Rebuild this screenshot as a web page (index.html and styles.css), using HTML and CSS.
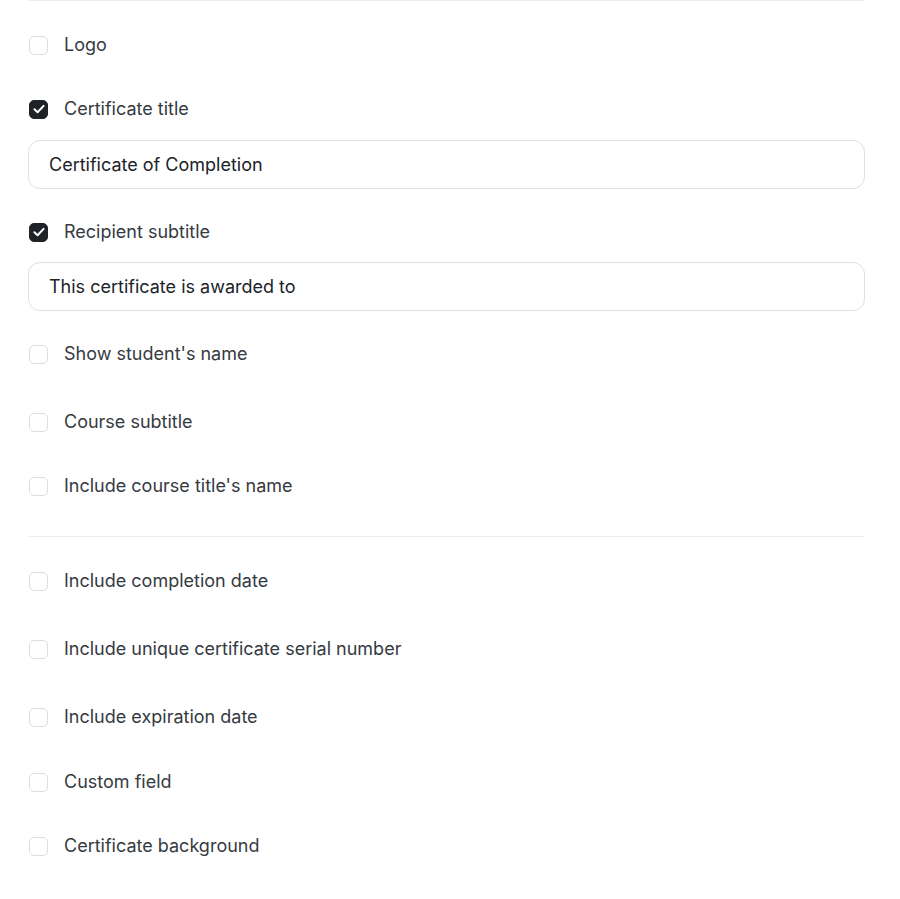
FILE: index.html
```html
<!DOCTYPE html>
<html lang="en">
<head>
<meta charset="utf-8">
<title>Certificate settings</title>
<link rel="stylesheet" href="styles.css">
</head>
<body>
<div class="panel">
  <div class="divider divider-top"></div>

  <label class="row r-logo"><span class="box"></span><span class="label">Logo</span></label>

  <label class="row r-gap40"><span class="box checked"><svg viewBox="0 0 14 14" width="14" height="14"><path d="M2.4 7.3 L5.6 10.3 L11.6 3.9" fill="none" stroke="#fff" stroke-width="2" stroke-linecap="round" stroke-linejoin="round"/></svg></span><span class="label">Certificate title</span></label>
  <div class="field f-first">Certificate of Completion</div>

  <label class="row r-gap31"><span class="box checked"><svg viewBox="0 0 14 14" width="14" height="14"><path d="M2.4 7.3 L5.6 10.3 L11.6 3.9" fill="none" stroke="#fff" stroke-width="2" stroke-linecap="round" stroke-linejoin="round"/></svg></span><span class="label">Recipient subtitle</span></label>
  <div class="field f-second">This certificate is awarded to</div>

  <label class="row r-gap31"><span class="box"></span><span class="label">Show student's name</span></label>
  <label class="row r-gap44"><span class="box"></span><span class="label">Course subtitle</span></label>
  <label class="row r-gap40"><span class="box"></span><span class="label">Include course title's name</span></label>

  <div class="divider divider-mid"></div>

  <label class="row r-gap32"><span class="box"></span><span class="label">Include completion date</span></label>
  <label class="row r-gap44"><span class="box"></span><span class="label">Include unique certificate serial number</span></label>
  <label class="row r-gap44"><span class="box"></span><span class="label">Include expiration date</span></label>
  <label class="row r-gap41"><span class="box"></span><span class="label">Custom field</span></label>
  <label class="row r-gap40"><span class="box"></span><span class="label">Certificate background</span></label>
</div>
</body>
</html>
```

FILE: styles.css
```css
* { box-sizing: border-box; }
html, body { margin: 0; padding: 0; background: #ffffff; }
body {
  font-family: Inter, "Noto Sans", "DejaVu Sans", sans-serif;
  font-size: 18px;
  color: #363a41;
}
.panel {
  display: flex;
  flex-direction: column;
  margin-left: 28px;
  width: 837px;
}
.divider {
  height: 1px;
  background: #ececee;
  margin-left: 1px;
  margin-right: 1px;
}
.divider-mid { margin-top: 38px; }
.row {
  display: flex;
  align-items: center;
  height: 24px;
  gap: 16px;
  padding-left: 1px;
}
.r-logo { margin-top: 32px; }
.r-gap31 { margin-top: 31px; }
.r-gap32 { margin-top: 32px; }
.r-gap40 { margin-top: 40px; }
.r-gap41 { margin-top: 41px; }
.r-gap44 { margin-top: 44px; }
.box {
  width: 19px;
  height: 19px;
  border: 1px solid #dcdde0;
  border-radius: 5px;
  background: #fff;
  display: flex;
  align-items: center;
  justify-content: center;
  flex: none;
}
.box.checked {
  background: #1f2227;
  border-color: #1f2227;
}
.label { line-height: 24px; }
.field {
  height: 49px;
  border: 1px solid #dedfe2;
  border-radius: 12px;
  padding: 0 20px;
  display: flex;
  align-items: center;
  color: #202329;
  font-size: 18px;
}
.f-first { margin-top: 19px; }
.f-second { margin-top: 18px; }
```
